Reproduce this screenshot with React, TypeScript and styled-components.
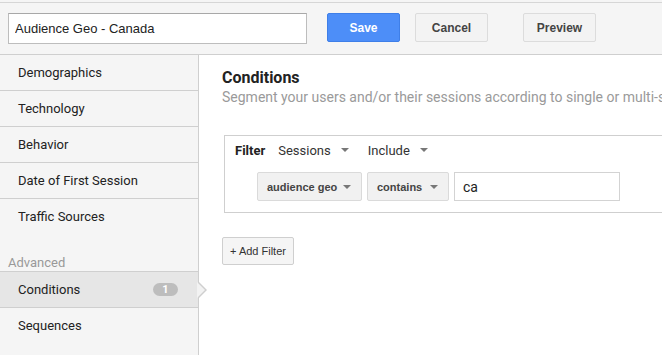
import React from "react";
import styled, { createGlobalStyle } from "styled-components";

const GlobalStyle = createGlobalStyle`
  html, body {
    margin: 0;
    padding: 0;
    background: #fff;
  }
  body {
    font-family: Roboto, "Liberation Sans", Arial, sans-serif;
  }
`;

const Page = styled.div`
  width: 662px;
  height: 355px;
  overflow: hidden;
  display: flex;
  flex-direction: column;
  background: #fff;
`;

const TopBar = styled.header`
  background: #f5f5f5;
  padding-top: 2px;
`;

const Toolbar = styled.div`
  display: flex;
  align-items: flex-start;
  height: 53px;
  padding: 10px 0 0 8px;
  box-sizing: border-box;
  border-top: 1px solid #d6d6d6;
  border-bottom: 1px solid #cfcfcf;
`;

const NameInput = styled.input`
  box-sizing: border-box;
  width: 299px;
  height: 31px;
  padding: 0 6px;
  border: 1px solid #bdbdbd;
  border-top-color: #a8a8a8;
  background: #fff;
  font-family: "Liberation Sans", Arial, sans-serif;
  font-size: 13px;
  color: #222;
  outline: none;
`;

const ToolButton = styled.button<{ $primary?: boolean; $gap: number }>`
  box-sizing: border-box;
  margin-left: ${({ $gap }) => $gap}px;
  width: 73px;
  height: 29px;
  border-radius: 2px;
  border: 1px solid ${({ $primary }) => ($primary ? "#3f7fe8" : "#dcdcdc")};
  background: ${({ $primary }) => ($primary ? "#4d8ef8" : "#f3f3f3")};
  color: ${({ $primary }) => ($primary ? "#fff" : "#444")};
  font-family: "Liberation Sans", Arial, sans-serif;
  font-size: 12px;
  font-weight: bold;
  padding: 0;
`;

const Body = styled.div`
  flex: 1;
  display: flex;
  min-height: 0;
`;

const Sidebar = styled.nav`
  width: 198px;
  flex-shrink: 0;
  background: #f5f5f5;
  border-right: 1px solid #cfcfcf;
  display: flex;
  flex-direction: column;
`;

const NavItem = styled.div<{ $divider?: boolean; $active?: boolean; $topLine?: boolean }>`
  position: relative;
  height: 35px;
  display: flex;
  align-items: center;
  padding: 0 20px 0 18px;
  font-size: 13px;
  color: #222;
  background: ${({ $active }) => ($active ? "#e6e6e6" : "transparent")};
  border-top: ${({ $topLine }) => ($topLine ? "1px solid #cfcfcf" : "none")};
  border-bottom: ${({ $divider }) => ($divider ? "1px solid #cfcfcf" : "none")};
`;

const Label = styled.span`
  flex: 1;
`;

const Badge = styled.span`
  width: 25px;
  height: 13px;
  border-radius: 7px;
  background: #bdbdbd;
  color: #fff;
  font-size: 11px;
  font-weight: bold;
  display: flex;
  align-items: center;
  justify-content: center;
`;

const Pointer = styled.span`
  position: absolute;
  right: -9px;
  top: 50%;
  margin-top: -9px;
  width: 0;
  height: 0;
  border-top: 9px solid transparent;
  border-bottom: 9px solid transparent;
  border-left: 9px solid #cfcfcf;

  &::after {
    content: "";
    position: absolute;
    left: -10px;
    top: -8px;
    border-top: 8px solid transparent;
    border-bottom: 8px solid transparent;
    border-left: 8px solid #f2f2f2;
  }
`;

const SectionTitle = styled.div`
  height: 37px;
  display: flex;
  align-items: flex-end;
  padding: 0 0 1px 8px;
  box-sizing: border-box;
  font-size: 13px;
  color: #999;
`;

const Main = styled.main`
  flex: 1;
  min-width: 0;
  overflow: hidden;
  padding: 13px 0 0 23px;
`;

const Heading = styled.h2`
  margin: 0;
  font-size: 16px;
  font-weight: bold;
  color: #222;
  line-height: 20px;
`;

const Subtitle = styled.p`
  margin: 0;
  font-size: 14px;
  color: #9a9a9a;
  white-space: nowrap;
  line-height: 18px;
`;

const FilterBox = styled.section`
  box-sizing: border-box;
  margin: 29px 0 0 2px;
  width: 600px;
  height: 78px;
  border: 1px solid #cfcfcf;
  padding: 6px 0 0 10px;
`;

const FilterHead = styled.div`
  display: flex;
  align-items: center;
  height: 16px;
  font-size: 13px;
  color: #333;
`;

const FilterTitle = styled.span`
  font-weight: bold;
  color: #222;
  margin-right: 13px;
`;

const Caret = styled.span<{ $gap?: number }>`
  display: inline-block;
  width: 0;
  height: 0;
  margin-left: ${({ $gap }) => $gap ?? 9}px;
  border-left: 4px solid transparent;
  border-right: 4px solid transparent;
  border-top: 4px solid #777;
`;

const HeadMenu = styled.span<{ $after: number }>`
  display: flex;
  align-items: center;
  margin-right: ${({ $after }) => $after}px;
`;

const ConditionRow = styled.div`
  display: flex;
  align-items: center;
  gap: 5px;
  margin: 14px 0 0 22px;
`;

const Select = styled.div<{ $w: number }>`
  box-sizing: border-box;
  width: ${({ $w }) => $w}px;
  height: 29px;
  display: flex;
  align-items: center;
  justify-content: space-between;
  padding: 0 10px 0 9px;
  border: 1px solid #dadada;
  border-radius: 2px;
  background: #f1f1f1;
  font-family: "Liberation Sans", Arial, sans-serif;
  font-size: 11px;
  font-weight: bold;
  color: #444;
`;

const ValueInput = styled.input`
  box-sizing: border-box;
  width: 166px;
  height: 29px;
  padding: 0 8px;
  border: 1px solid #d3d3d3;
  font-family: Roboto, "Liberation Sans", Arial, sans-serif;
  font-size: 14px;
  color: #222;
  outline: none;
`;

const AddButton = styled.button`
  margin-top: 24px;
  box-sizing: border-box;
  width: 72px;
  height: 28px;
  border: 1px solid #cfcfcf;
  border-radius: 2px;
  background: #f5f5f5;
  font-family: "Liberation Sans", Arial, sans-serif;
  font-size: 11px;
  color: #333;
  padding: 0;
`;

const navItems = [
  "Demographics",
  "Technology",
  "Behavior",
  "Date of First Session",
];

export default function App() {
  return (
    <Page>
      <GlobalStyle />
      <TopBar>
        <Toolbar>
          <NameInput defaultValue="Audience Geo - Canada" />
          <ToolButton $primary $gap={20}>Save</ToolButton>
          <ToolButton $gap={15}>Cancel</ToolButton>
          <ToolButton $gap={35}>Preview</ToolButton>
        </Toolbar>
      </TopBar>
      <Body>
        <Sidebar>
          {navItems.map((item) => (
            <NavItem key={item} $divider>
              <Label>{item}</Label>
            </NavItem>
          ))}
          <NavItem>
            <Label>Traffic Sources</Label>
          </NavItem>
          <SectionTitle>Advanced</SectionTitle>
          <NavItem $active $topLine $divider>
            <Label>Conditions</Label>
            <Badge>1</Badge>
            <Pointer />
          </NavItem>
          <NavItem>
            <Label>Sequences</Label>
          </NavItem>
        </Sidebar>
        <Main>
          <Heading>Conditions</Heading>
          <Subtitle>
            Segment your users and/or their sessions according to single or
            multi-session conditions.
          </Subtitle>
          <FilterBox>
            <FilterHead>
              <FilterTitle>Filter</FilterTitle>
              <HeadMenu $after={19}>
                Sessions
                <Caret $gap={10} />
              </HeadMenu>
              <HeadMenu $after={0}>
                Include
                <Caret $gap={10} />
              </HeadMenu>
            </FilterHead>
            <ConditionRow>
              <Select $w={105}>
                audience geo
                <Caret $gap={0} />
              </Select>
              <Select $w={82}>
                contains
                <Caret $gap={0} />
              </Select>
              <ValueInput defaultValue="ca" />
            </ConditionRow>
          </FilterBox>
          <AddButton>+ Add Filter</AddButton>
        </Main>
      </Body>
    </Page>
  );
}
